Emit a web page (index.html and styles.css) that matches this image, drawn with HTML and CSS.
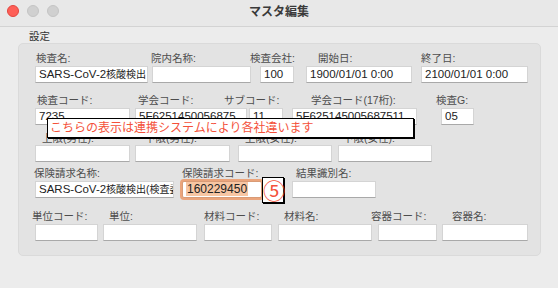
FILE: index.html
```html
<!DOCTYPE html>
<html lang="ja">

<head>
    <meta charset="UTF-8">
    <meta name="viewport" content="width=device-width, initial-scale=1.0">
    <title>マスタ編集</title>
    <link rel="stylesheet" href="styles.css">
</head>

<body>
    <div class="window">
        <div class="titlebar">
            <div class="lights">
                <span class="light red"></span>
                <span class="light"></span>
                <span class="light"></span>
            </div>
            <div class="title">マスタ編集</div>
        </div>

        <div class="content">
            <div class="group-title">設定</div>
            <div class="group">

                <!-- 1行目 -->
                <div class="row r1">
                    <div class="fld test-name">
                        <label>検査名:</label>
                        <div class="inp">SARS-CoV-2<span class="jp">核酸検出</span></div>
                    </div>
                    <div class="fld hosp-name">
                        <label>院内名称:</label>
                        <div class="inp"></div>
                    </div>
                    <div class="fld company">
                        <label>検査会社:</label>
                        <div class="inp">100</div>
                    </div>
                    <div class="fld start">
                        <label>開始日:</label>
                        <div class="inp">1900/01/01 0:00</div>
                    </div>
                    <div class="fld end">
                        <label>終了日:</label>
                        <div class="inp">2100/01/01 0:00</div>
                    </div>
                </div>

                <!-- 2行目 -->
                <div class="row r2">
                    <div class="fld test-code">
                        <label>検査コード:</label>
                        <div class="inp">7235</div>
                    </div>
                    <div class="fld soc-code">
                        <label>学会コード:</label>
                        <div class="inp">5F6251450056875</div>
                    </div>
                    <div class="fld sub-code">
                        <label>サブコード:</label>
                        <div class="inp">11</div>
                    </div>
                    <div class="fld soc-code17">
                        <label>学会コード(17桁):</label>
                        <div class="inp">5F625145005687511</div>
                    </div>
                    <div class="fld group-g">
                        <label>検査G:</label>
                        <div class="inp">05</div>
                    </div>
                </div>

                <!-- 3行目 -->
                <div class="row r3">
                    <div class="fld lim1">
                        <label>上限(男性):</label>
                        <div class="inp"></div>
                    </div>
                    <div class="fld lim2">
                        <label>下限(男性):</label>
                        <div class="inp"></div>
                    </div>
                    <div class="fld lim3">
                        <label>上限(女性):</label>
                        <div class="inp"></div>
                    </div>
                    <div class="fld lim4">
                        <label>下限(女性):</label>
                        <div class="inp"></div>
                    </div>
                </div>

                <!-- 4行目 -->
                <div class="row r4">
                    <div class="fld ins-name">
                        <label>保険請求名称:</label>
                        <div class="inp">SARS-CoV-2<span class="jp">核酸検出(検査委託)</span></div>
                    </div>
                    <div class="fld ins-code">
                        <label>保険請求コード:</label>
                        <div class="inp focus"><span class="sel">160229450</span></div>
                    </div>
                    <div class="fld result">
                        <label>結果識別名:</label>
                        <div class="inp"></div>
                    </div>
                </div>

                <!-- 5行目 -->
                <div class="row r5">
                    <div class="fld unit-code">
                        <label>単位コード:</label>
                        <div class="inp"></div>
                    </div>
                    <div class="fld unit">
                        <label>単位:</label>
                        <div class="inp"></div>
                    </div>
                    <div class="fld mat-code">
                        <label>材料コード:</label>
                        <div class="inp"></div>
                    </div>
                    <div class="fld mat-name">
                        <label>材料名:</label>
                        <div class="inp"></div>
                    </div>
                    <div class="fld cont-code">
                        <label>容器コード:</label>
                        <div class="inp"></div>
                    </div>
                    <div class="fld cont-name">
                        <label>容器名:</label>
                        <div class="inp"></div>
                    </div>
                </div>

                <!-- 注釈 -->
                <div class="note">こちらの表示は連携システムにより各社違います</div>
                <div class="badge">⑤</div>
            </div>
        </div>
    </div>
</body>

</html>
```

FILE: styles.css
```css
* {
    box-sizing: border-box;
}

body {
    margin: 0;
    background: #ececec;
    font-family: "Liberation Sans", "Noto Sans CJK JP", sans-serif;
    color: #222;
}

.window {
    width: 558px;
    height: 288px;
    background: #ececec;
}

.titlebar {
    position: relative;
    height: 27px;
    background: #e8e8e8;
    border-bottom: 1px solid #d3d3d3;
    display: flex;
    align-items: center;
    justify-content: center;
}

.lights {
    position: absolute;
    left: 7px;
    top: 5px;
    display: flex;
    gap: 8px;
}

.light {
    width: 12px;
    height: 12px;
    border-radius: 50%;
    background: #d0d0d0;
    border: 1px solid #c4c4c4;
}

.light.red {
    background: #fe5f57;
    border-color: #e2463f;
}

.title {
    font-size: 12px;
    font-weight: bold;
    color: #3a3a3a;
    margin-top: -5px;
}

.content {
    padding: 3px 0 0 18px;
}

.group-title {
    font-size: 10.5px;
    line-height: 13px;
    color: #333;
    padding-left: 11px;
}

.group {
    position: relative;
    width: 523px;
    height: 213px;
    background: #e3e3e3;
    border: 1px solid #dadada;
    border-radius: 5px;
    padding: 6px 0 0 16px;
}

.row {
    display: flex;
}

.r2 {
    margin-top: 9px;
}

.r3 {
    margin-top: 6px;
}

.r4 {
    margin-top: 3px;
}

.r5 {
    margin-top: 10px;
}

.fld {
    display: flex;
    flex-direction: column;
    flex: none;
}

.fld label {
    font-size: 10.5px;
    line-height: 16px;
    color: #4d4d4d;
    white-space: nowrap;
}

.r3 .fld label {
    line-height: 14px;
}

.inp {
    height: 17px;
    background: #fff;
    border: 1px solid #d4d4d4;
    border-bottom-color: #a9a9a9;
    font-size: 11.5px;
    line-height: 15px;
    padding: 0 3px;
    white-space: nowrap;
    overflow: hidden;
}

.inp .jp {
    font-size: 10px;
}

.inp.focus {
    border-color: #d99b76;
    border-radius: 2px;
    box-shadow: 0 0 0 2px #eba57c;
    font-size: 12px;
}

.sel {
    background: #f7c6a3;
    padding: 0 1px;
}

/* 1行目 */
.test-name { width: 113px; }
.test-name label { margin-left: 1px; }
.hosp-name { width: 99px; margin-left: 4px; }
.hosp-name label { margin-left: -1px; }
.company { width: 34px; margin-left: 9px; }
.company label { margin-left: -10px; }
.start { width: 106px; margin-left: 12px; }
.start label { margin-left: 12px; }
.end { width: 107px; margin-left: 9px; }

/* 2行目 */
.test-code { width: 95px; }
.test-code label { margin-left: 2px; }
.soc-code { width: 112px; margin-left: 5px; }
.soc-code label { margin-left: 3px; }
.sub-code { width: 34px; margin-left: 2px; }
.sub-code label { margin-left: -25px; }
.soc-code17 { width: 125px; margin-left: 9px; }
.soc-code17 label { margin-left: 19px; }
.group-g { width: 33px; margin-left: 24px; }
.group-g label { margin-left: -5px; }

/* 3行目 */
.lim1 { width: 95px; }
.lim1 label { margin-left: 7px; }
.lim2 { width: 95px; margin-left: 5px; }
.lim2 label { margin-left: 10px; }
.lim3 { width: 94px; margin-left: 8px; }
.lim3 label { margin-left: 7px; }
.lim4 { width: 94px; margin-left: 6px; }
.lim4 label { margin-left: 5px; }

/* 4行目 */
.ins-name { width: 139px; }
.ins-name label { margin-left: -1px; }
.ins-code { width: 80px; margin-left: 8px; }
.result { width: 84px; margin-left: 30px; }
.result label { margin-left: 4px; }

/* 5行目 */
.unit-code { width: 63px; }
.unit-code label { margin-left: -3px; }
.unit { width: 94px; margin-left: 5px; }
.unit label { margin-left: 6px; }
.mat-code { width: 68px; margin-left: 7px; }
.mat-name { width: 94px; margin-left: 6px; }
.mat-name label { margin-left: 6px; }
.cont-code { width: 59px; margin-left: 6px; }
.cont-code label { margin-left: -7px; }
.cont-name { width: 86px; margin-left: 5px; }
.cont-name label { margin-left: 10px; }

/* 注釈 */
.note {
    position: absolute;
    left: 28px;
    top: 74px;
    width: 367px;
    height: 20px;
    background: #fff;
    border: 1px solid #000;
    box-shadow: 1px 1px 0 #000;
    color: #f4513a;
    font-size: 12px;
    line-height: 18px;
    padding-left: 2px;
    white-space: nowrap;
}

.badge {
    position: absolute;
    left: 243px;
    top: 133px;
    width: 22px;
    height: 26px;
    background: #fff;
    border: 1px solid #000;
    box-shadow: 1px 1px 0 #000;
    color: #f4513a;
    font-family: "Noto Sans CJK JP", sans-serif;
    font-size: 22px;
    line-height: 23px;
    text-align: center;
}
```
